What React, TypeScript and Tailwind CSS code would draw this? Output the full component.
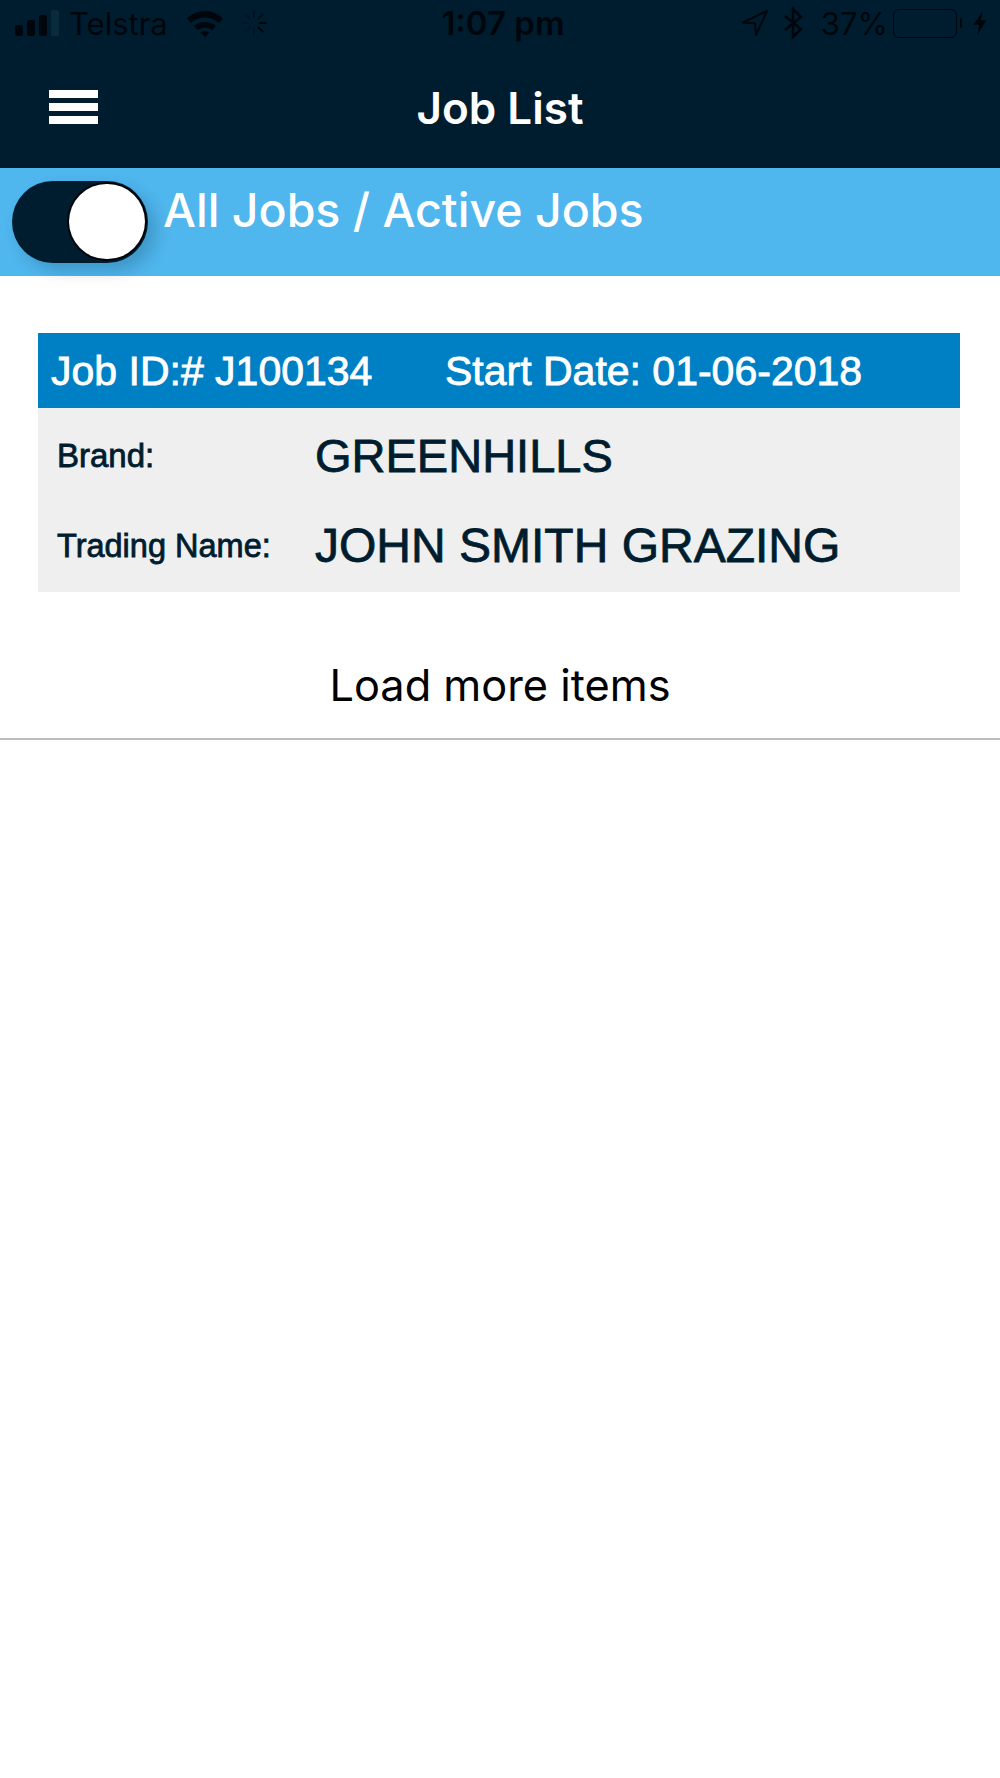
const inter = { fontFamily: '"Inter", "Liberation Sans", sans-serif' };

const SignalBars = () => (
  <svg width="46" height="28" viewBox="0 0 46 28" fill="none">
    <rect x="1" y="16" width="8" height="11" rx="2" fill="#00060c" />
    <rect x="13" y="11" width="8" height="16" rx="2" fill="#00060c" />
    <rect x="25" y="6" width="8" height="21" rx="2" fill="#00060c" />
    <rect x="37" y="1" width="8" height="26" rx="2" fill="#0a2a3e" />
  </svg>
);

const Wifi = () => (
  <svg width="38" height="28" viewBox="0 0 38 28" fill="none">
    <path d="M1 9.500C11 -0.500 27 -0.500 37 9.500L33 14C25.500 6.500 12.500 6.500 5 14Z" fill="#00060c" />
    <path d="M8 17C14 11.500 24 11.500 30 17L26.500 21C22 17.500 16 17.500 11.500 21Z" fill="#00060c" />
    <path d="M14.500 23.500C17 21.500 21 21.500 23.500 23.500L19 28Z" fill="#00060c" />
  </svg>
);

const Spinner = () => (
  <svg width="26" height="26" viewBox="0 0 26 26" fill="none" strokeWidth="2" strokeLinecap="round">
    <path d="M13 1V7" stroke="#00060c" opacity="0.5" />
    <path d="M21.500 4.500L17.500 8.500" stroke="#00060c" opacity="0.6" />
    <path d="M25 13H19" stroke="#00060c" />
    <path d="M21.500 21.500L17.500 17.500" stroke="#00060c" />
    <path d="M13 25V19" stroke="#00060c" opacity="0.3" />
    <path d="M4.500 21.500L8.500 17.500" stroke="#00060c" opacity="0.25" />
    <path d="M1 13H7" stroke="#00060c" opacity="0.25" />
    <path d="M4.500 4.500L8.500 8.500" stroke="#00060c" opacity="0.35" />
  </svg>
);

const LocationArrow = () => (
  <svg width="26" height="26" viewBox="0 0 26 26" fill="none">
    <path d="M25 1L1 12.500L13 13.500L14 25Z" stroke="#00060c" strokeWidth="2" />
  </svg>
);

const Bluetooth = () => (
  <svg width="20" height="32" viewBox="0 0 20 32" fill="none">
    <path d="M2 9L18 22L10 30V2L18 10L2 23" stroke="#00060c" strokeWidth="2.500" />
  </svg>
);

const Bolt = () => (
  <svg width="16" height="24" viewBox="0 0 16 26" fill="none">
    <path d="M11 0L1 15H7L5 26L15 10H9Z" fill="#00060c" />
  </svg>
);

const Battery = () => (
  <div className="flex items-center gap-[3px]">
    <div className="w-[64px] h-[29px] rounded-[6px] border border-[#00060c]" />
    <div className="w-[2px] h-[10px] rounded-r-sm bg-[#00060c]" />
  </div>
);

const StatusBar = () => (
  <div className="grid grid-cols-3 items-center h-[46px] pl-[14px] pr-[12px] text-[#00060c]" style={inter}>
    <div className="flex items-center">
      <SignalBars />
      <span className="ml-[9px] text-[31px] leading-none">Telstra</span>
      <span className="ml-[18px]"><Wifi /></span>
      <span className="ml-[17px]"><Spinner /></span>
    </div>
    <div className="pl-[4px] text-center text-[33px] leading-none font-semibold whitespace-nowrap">1:07 pm</div>
    <div className="flex items-center justify-end">
      <LocationArrow />
      <span className="ml-[15px]"><Bluetooth /></span>
      <span className="ml-[18px] text-[31px] leading-none">37%</span>
      <span className="ml-[5px]"><Battery /></span>
      <span className="ml-[10px]"><Bolt /></span>
    </div>
  </div>
);

const NavBar = () => (
  <div className="grid grid-cols-[1fr_auto_1fr] items-center h-[122px]">
    <div className="flex flex-col gap-[5px] pl-[49px]">
      <div className="w-[49px] h-[8px] bg-white" />
      <div className="w-[49px] h-[8px] bg-white" />
      <div className="w-[49px] h-[8px] bg-white" />
    </div>
    <span className="pt-[2px] text-[44px] leading-none font-semibold text-white" style={inter}>Job List</span>
  </div>
);

const Toggle = () => (
  <div className="relative w-[136px] h-[82px] shrink-0 rounded-full bg-[#001d2f] shadow-[8px_8px_16px_rgba(0,29,47,0.2)]">
    <div className="absolute right-[3px] top-[3px] w-[76px] h-[75px] rounded-full bg-white shadow-[0_0_0_2px_#00060c]" />
  </div>
);

const JobCard = () => (
  <div className="ml-[38px] mr-[40px] mt-[57px] [-webkit-text-stroke:0.8px]" style={{ fontFamily: '"Liberation Sans", Arial, sans-serif' }}>
    <div className="flex items-center h-[75px] pl-[13px] pt-[2px] bg-[#0080c4] text-white text-[41px] leading-none">
      <span className="w-[394px]">Job ID:# J100134</span>
      <span>Start Date: 01-06-2018</span>
    </div>
    <div className="h-[184px] bg-[#efefef] text-[#001d2f]">
      <div className="flex items-center h-[95px] pl-[19px]">
        <span className="w-[258px] text-[33px] leading-none">Brand:</span>
        <span className="text-[47px] leading-none">GREENHILLS</span>
      </div>
      <div className="flex items-center h-[86px] pl-[19px]">
        <span className="w-[258px] text-[32.500px] leading-none">Trading Name:</span>
        <span className="text-[48px] leading-none">JOHN SMITH GRAZING</span>
      </div>
    </div>
  </div>
);

export default function App() {
  return (
    <div className="w-[1000px] h-[1778px] bg-white overflow-hidden">
      <div className="bg-[#001d2f]">
        <StatusBar />
        <NavBar />
      </div>
      <div className="flex h-[108px] pl-[12px] pt-[13px] bg-[#4fb6ee]">
        <Toggle />
        <span className="ml-[15px] mt-[6px] text-[46.500px] leading-none font-medium text-white" style={inter}>All Jobs / Active Jobs</span>
      </div>
      <JobCard />
      <div className="flex items-center justify-center h-[148px] pt-[42px] border-b-2 border-[#bdbdbd] text-[43.300px] leading-none text-black" style={inter}>
        Load more items
      </div>
    </div>
  );
}
